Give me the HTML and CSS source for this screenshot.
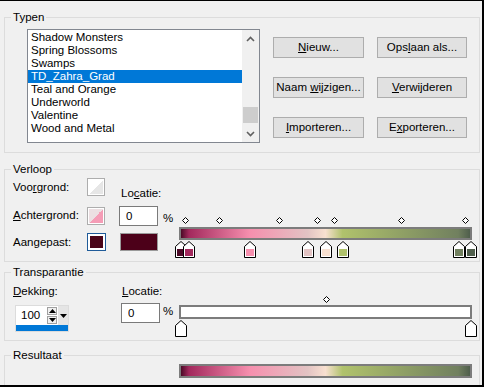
FILE: index.html
```html
<!DOCTYPE html>
<html lang="nl">
<head>
    <meta charset="UTF-8">
    <title>Verloop</title>
    <link rel="stylesheet" href="styles.css">
</head>
<body>
<div class="dialog">

    <fieldset class="group group-types">
        <legend>Typen</legend>
        <div class="types">
            <div class="listbox">
                <ul class="list">
                    <li>Shadow Monsters</li>
                    <li>Spring Blossoms</li>
                    <li>Swamps</li>
                    <li class="selected">TD_Zahra_Grad</li>
                    <li>Teal and Orange</li>
                    <li>Underworld</li>
                    <li>Valentine</li>
                    <li>Wood and Metal</li>
                </ul>
                <div class="scrollbar">
                    <span class="scroll-btn">
                        <svg width="9" height="6" viewBox="0 0 9 6"><polyline points="1,5 4.5,1.5 8,5" fill="none" stroke="#606060" stroke-width="1.6"/></svg>
                    </span>
                    <span class="scroll-track"><span class="scroll-thumb"></span></span>
                    <span class="scroll-btn">
                        <svg width="9" height="6" viewBox="0 0 9 6"><polyline points="1,1 4.5,4.5 8,1" fill="none" stroke="#606060" stroke-width="1.6"/></svg>
                    </span>
                </div>
            </div>
            <div class="type-buttons">
                <button><u>N</u>ieuw...</button>
                <button>Ops<u>l</u>aan als...</button>
                <button>Naam <u>w</u>ijzigen...</button>
                <button><u>V</u>erwijderen</button>
                <button><u>I</u>mporteren...</button>
                <button>E<u>x</u>porteren...</button>
            </div>
        </div>
    </fieldset>

    <fieldset class="group group-gradient">
        <legend>Verloop</legend>
        <div class="gradient-grid">
            <span class="label row1">Voo<u>r</u>grond:</span>
            <span class="swatch swatch-fg row1"></span>
            <span class="label loc-label">Lo<u>c</u>atie:</span>

            <span class="label row2"><u>A</u>chtergrond:</span>
            <span class="swatch swatch-bg row2"></span>
            <input class="field row2" type="text" value="0">
            <span class="percent row2">%</span>

            <span class="label row3">Aan<u>g</u>epast:</span>
            <span class="swatch swatch-custom row3"></span>
            <span class="big-swatch row3"></span>

            <div class="ramp">
                <div class="marks">
                    <span class="mid" style="left: 1.4%"><svg width="7" height="7" viewBox="0 0 7 7"><path d="M3.5 0.5L6.5 3.5L3.5 6.5L0.5 3.5Z" fill="#fff" stroke="#000"/></svg></span>
                    <span class="mid" style="left: 13.1%"><svg width="7" height="7" viewBox="0 0 7 7"><path d="M3.5 0.5L6.5 3.5L3.5 6.5L0.5 3.5Z" fill="#fff" stroke="#000"/></svg></span>
                    <span class="mid" style="left: 33.8%"><svg width="7" height="7" viewBox="0 0 7 7"><path d="M3.5 0.5L6.5 3.5L3.5 6.5L0.5 3.5Z" fill="#fff" stroke="#000"/></svg></span>
                    <span class="mid" style="left: 46.9%"><svg width="7" height="7" viewBox="0 0 7 7"><path d="M3.5 0.5L6.5 3.5L3.5 6.5L0.5 3.5Z" fill="#fff" stroke="#000"/></svg></span>
                    <span class="mid" style="left: 52.8%"><svg width="7" height="7" viewBox="0 0 7 7"><path d="M3.5 0.5L6.5 3.5L3.5 6.5L0.5 3.5Z" fill="#fff" stroke="#000"/></svg></span>
                    <span class="mid" style="left: 75.9%"><svg width="7" height="7" viewBox="0 0 7 7"><path d="M3.5 0.5L6.5 3.5L3.5 6.5L0.5 3.5Z" fill="#fff" stroke="#000"/></svg></span>
                    <span class="mid" style="left: 97.9%"><svg width="7" height="7" viewBox="0 0 7 7"><path d="M3.5 0.5L6.5 3.5L3.5 6.5L0.5 3.5Z" fill="#fff" stroke="#000"/></svg></span>
                </div>
                <div class="bar bar-gradient"></div>
                <div class="stops">
                    <span class="stop" style="left: 0%"><svg width="12" height="17" viewBox="0 0 12 17"><path d="M0.5 16.5V5.5L6 0.5L11.5 5.5V16.5Z" fill="#fff" stroke="#000"/><rect x="2" y="8" width="8" height="7" fill="#4c0a27"/></svg></span>
                    <span class="stop" style="left: 2.8%"><svg width="12" height="17" viewBox="0 0 12 17"><path d="M0.5 16.5V5.5L6 0.5L11.5 5.5V16.5Z" fill="#fff" stroke="#000"/><rect x="2" y="8" width="8" height="7" fill="#a3295d"/></svg></span>
                    <span class="stop" style="left: 23.8%"><svg width="12" height="17" viewBox="0 0 12 17"><path d="M0.5 16.5V5.5L6 0.5L11.5 5.5V16.5Z" fill="#fff" stroke="#000"/><rect x="2" y="8" width="8" height="7" fill="#f68fae"/></svg></span>
                    <span class="stop" style="left: 43.8%"><svg width="12" height="17" viewBox="0 0 12 17"><path d="M0.5 16.5V5.5L6 0.5L11.5 5.5V16.5Z" fill="#fff" stroke="#000"/><rect x="2" y="8" width="8" height="7" fill="#e2c3c3"/></svg></span>
                    <span class="stop" style="left: 50%"><svg width="12" height="17" viewBox="0 0 12 17"><path d="M0.5 16.5V5.5L6 0.5L11.5 5.5V16.5Z" fill="#fff" stroke="#000"/><rect x="2" y="8" width="8" height="7" fill="#f8e0d0"/></svg></span>
                    <span class="stop" style="left: 55.9%"><svg width="12" height="17" viewBox="0 0 12 17"><path d="M0.5 16.5V5.5L6 0.5L11.5 5.5V16.5Z" fill="#fff" stroke="#000"/><rect x="2" y="8" width="8" height="7" fill="#b0c26c"/></svg></span>
                    <span class="stop" style="left: 95.9%"><svg width="12" height="17" viewBox="0 0 12 17"><path d="M0.5 16.5V5.5L6 0.5L11.5 5.5V16.5Z" fill="#fff" stroke="#000"/><rect x="2" y="8" width="8" height="7" fill="#71805f"/></svg></span>
                    <span class="stop" style="left: 100%"><svg width="12" height="17" viewBox="0 0 12 17"><path d="M0.5 16.5V5.5L6 0.5L11.5 5.5V16.5Z" fill="#fff" stroke="#000"/><rect x="2" y="8" width="8" height="7" fill="#4f5e4c"/></svg></span>
                </div>
            </div>
        </div>
    </fieldset>

    <fieldset class="group group-opacity">
        <legend>Transparantie</legend>
        <div class="opacity-grid">
            <span class="label"><u>D</u>ekking:</span>
            <span class="label op-label"><u>L</u>ocatie:</span>

            <div class="spinner">
                <div class="spin-field">
                    <span class="spin-value">100</span>
                    <span class="spin-arrows">
                        <span class="spin-btn"><svg width="7" height="4" viewBox="0 0 7 4"><path d="M0 4L3.5 0L7 4Z" fill="#000"/></svg></span>
                        <span class="spin-btn"><svg width="7" height="4" viewBox="0 0 7 4"><path d="M0 0L3.5 4L7 0Z" fill="#000"/></svg></span>
                    </span>
                    <span class="spin-drop"><svg width="7" height="4" viewBox="0 0 7 4"><path d="M0 0L3.5 4L7 0Z" fill="#000"/></svg></span>
                </div>
                <div class="spin-level"></div>
            </div>
            <input class="field op-field" type="text" value="0">
            <span class="percent op-percent">%</span>

            <div class="ramp op-ramp">
                <div class="marks">
                    <span class="mid" style="left: 50%"><svg width="7" height="7" viewBox="0 0 7 7"><path d="M3.5 0.5L6.5 3.5L3.5 6.5L0.5 3.5Z" fill="#fff" stroke="#000"/></svg></span>
                </div>
                <div class="bar bar-opacity"></div>
                <div class="stops">
                    <span class="stop" style="left: 0%"><svg width="12" height="17" viewBox="0 0 12 17"><path d="M0.5 16.5V5.5L6 0.5L11.5 5.5V16.5Z" fill="#fff" stroke="#000"/></svg></span>
                    <span class="stop" style="left: 100%"><svg width="12" height="17" viewBox="0 0 12 17"><path d="M0.5 16.5V5.5L6 0.5L11.5 5.5V16.5Z" fill="#fff" stroke="#000"/></svg></span>
                </div>
            </div>
        </div>
    </fieldset>

    <fieldset class="group group-result">
        <legend>Resultaat</legend>
        <div class="bar bar-gradient bar-result"></div>
    </fieldset>

</div>
</body>
</html>
```

FILE: styles.css
```css
body {
    margin: 0;
    font-family: "Liberation Sans", Arial, sans-serif;
    font-size: 11.5px;
    line-height: 13px;
    color: #000;
}
.dialog {
    box-sizing: border-box;
    width: 484px;
    height: 387px;
    overflow: hidden;
    background: #f0f0f0;
    border-top: 1px solid #000;
    border-right: 2px solid #000;
    border-bottom: 2px solid #000;
    padding: 0 2px 0 4px;
}

/* group boxes (legend sits at the inner edge, so content gets its own margin) */
.group {
    margin: 0;
    padding: 0;
    min-width: 0;
    border: 1px solid #dcdcdc;
}
.group legend {
    margin-left: 6px;
    padding: 0 2px;
    line-height: 13px;
}
.group-types {
    margin-top: 10px;
    padding: 5px 0 9px;
}
.group-gradient {
    margin-top: 10px;
    padding: 2px 0 10px;
}
.group-opacity {
    margin-top: 4px;
    padding: 6px 0 9px;
}
.group-result {
    margin-top: 8px;
    padding: 2px 0 10px;
}

/* Typen */
.types {
    display: flex;
    align-items: flex-start;
    margin-left: 22px;
}
.listbox {
    box-sizing: border-box;
    width: 233px;
    height: 114px;
    display: flex;
    background: #fff;
    border: 1px solid #828790;
}
.list {
    flex: 1;
    list-style: none;
    margin: 0;
    padding: 1px 0 0;
}
.list li {
    height: 13px;
    padding-left: 3px;
    white-space: nowrap;
}
.list li.selected {
    background: #0078d7;
    color: #fff;
}
.scrollbar {
    width: 17px;
    display: flex;
    flex-direction: column;
    background: #f0f0f0;
}
.scroll-btn {
    height: 17px;
    display: flex;
    align-items: center;
    justify-content: center;
}
.scroll-track {
    flex: 1;
}
.scroll-thumb {
    display: block;
    height: 16px;
    margin: 60px 1px 0;
    background: #cdcdcd;
}
.type-buttons {
    display: grid;
    grid-template-columns: 91px 90px;
    grid-auto-rows: 21px;
    gap: 19px 13px;
    margin: 8px 0 0 13px;
}
.type-buttons button {
    font: inherit;
    color: #000;
    padding: 0;
    background: #e1e1e1;
    border: 1px solid #adadad;
    white-space: nowrap;
}

/* Verloop */
.gradient-grid {
    display: grid;
    grid-template-columns: 74px 32px 39px 17px 1fr;
    grid-template-rows: 24px 31px 18px;
    margin-left: 8px;
}
.label {
    white-space: nowrap;
}
.row1 { grid-row: 1; }
.row2 { grid-row: 2; }
.row3 { grid-row: 3; }
.gradient-grid .label.row1 { margin-top: 3px; align-self: start; }
.gradient-grid .label.row2 { margin-top: 7px; align-self: start; }
.gradient-grid .label.row3 { align-self: center; }
.loc-label {
    grid-row: 1;
    grid-column: 3 / 5;
    align-self: end;
    margin: 0 0 2px 2px;
}
.swatch {
    grid-column: 2;
    box-sizing: border-box;
    width: 18px;
    height: 18px;
    align-self: start;
    border: 1px solid #adadad;
    padding: 1px;
}
.swatch-fg {
    background: linear-gradient(to bottom right, #fff 50%, #e6e6e6 50%) content-box, #fff;
}
.swatch-bg {
    margin-top: 5px;
    background: linear-gradient(to bottom right, #ecdfe2 50%, #f59cb6 50%) content-box, #fff;
}
.swatch-custom {
    width: 19px;
    height: 18px;
    border-color: #1f5b99;
    padding: 2px;
    background: linear-gradient(#4a0519, #4a0519) content-box, #fff;
}
.big-swatch {
    grid-column: 3;
    box-sizing: border-box;
    width: 38px;
    height: 18px;
    margin-left: 1px;
    background: #4c0019;
    border: 1px solid #9a9a9a;
}
.field {
    box-sizing: border-box;
    width: 39px;
    height: 20px;
    margin: 4px 0 0;
    padding: 0 0 0 6px;
    font: inherit;
    background: #fff;
    border: 1px solid #7a7a7a;
    align-self: start;
}
.gradient-grid .field {
    grid-column: 3;
}
.percent {
    align-self: start;
    margin: 10px 0 0 5px;
}
.gradient-grid .percent {
    grid-column: 4;
}

/* ramps: midpoint diamonds, colour bar, stops */
.ramp {
    grid-column: 5;
    grid-row: 2 / 4;
    padding-top: 15px;
}
.marks {
    position: relative;
    height: 7px;
    margin: 0 8px 0 6px;
}
.mid {
    position: absolute;
    top: 0;
    margin-left: -3px;
    line-height: 0;
}
.bar {
    box-sizing: border-box;
    width: 293px;
    height: 13px;
    margin: 3px 0 0 4px;
    border: 2px solid #7c7c7c;
}
.bar-gradient {
    background: linear-gradient(to right, #4c0a27 0%, #a3295d 2.8%, #f68fae 23.8%, #e2c3c3 43.8%, #f8e0d0 50%, #b0c26c 55.9%, #71805f 95.9%, #4f5e4c 100%);
}
.stops {
    position: relative;
    height: 17px;
    margin: 1px 8px 0 6px;
}
.stop {
    position: absolute;
    top: 0;
    margin-left: -6px;
    line-height: 0;
}

/* Transparantie */
.opacity-grid {
    display: grid;
    grid-template-columns: 108px 39px 15px 1fr;
    grid-template-rows: 13px 33px;
    margin-left: 8px;
}
.op-label {
    margin-left: 1px;
}
.spinner {
    grid-row: 2;
    grid-column: 1;
    align-self: start;
    width: 54px;
    margin: 7px 0 0 2px;
    background: #fff;
    border: 1px solid #dcdcdc;
    box-sizing: border-box;
}
.spin-field {
    display: flex;
    align-items: center;
    height: 19px;
}
.spin-value {
    flex: 1;
    padding-left: 5px;
}
.spin-arrows {
    display: flex;
    flex-direction: column;
    gap: 1px;
    margin-right: 1px;
}
.spin-btn {
    box-sizing: border-box;
    width: 10px;
    height: 8px;
    display: flex;
    align-items: center;
    justify-content: center;
    background: #f0f0f0;
    border: 1px solid #a0a0a0;
}
.spin-drop {
    width: 10px;
    height: 19px;
    display: flex;
    align-items: center;
    justify-content: center;
    background: #e5e5e5;
}
.spin-level {
    height: 6px;
    background: #0078d7;
}
.op-field {
    grid-row: 2;
    grid-column: 2;
    margin-top: 5px;
}
.op-percent {
    grid-row: 2;
    grid-column: 3;
    margin: 7px 0 0 3px;
}
.op-ramp {
    grid-column: 4;
    grid-row: 1 / 3;
    padding-top: 11px;
}
.op-ramp .bar {
    height: 14px;
    margin-top: 2px;
}
.bar-opacity {
    background: #fff;
}
.bar-result {
    height: 14px;
    margin: 0 0 0 174px;
}
```
